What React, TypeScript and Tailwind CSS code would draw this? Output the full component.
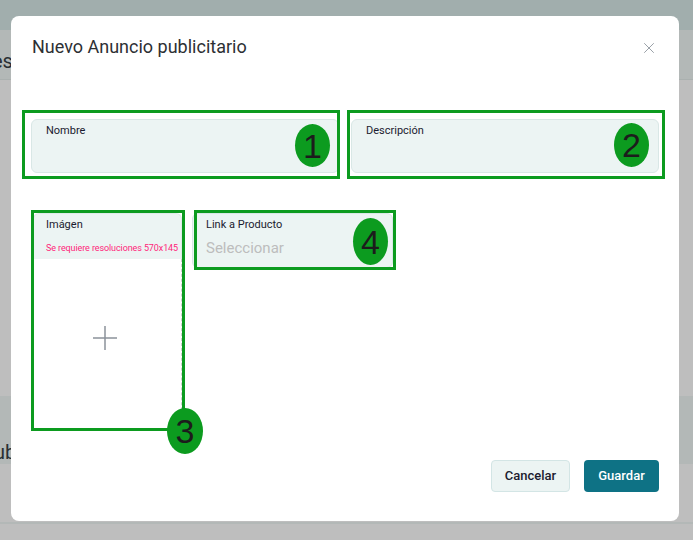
import { X } from "lucide-react";

const font = { fontFamily: "Roboto, 'Liberation Sans', sans-serif" };

function Marker({ n, className }: { n: string; className: string }) {
  return (
    <div
      className={`absolute flex items-center justify-center rounded-[50%] bg-[#0c9b1f] text-[34px] leading-none text-[#1c1c1c] ${className}`}
      style={{ fontFamily: "'Liberation Sans', Arial, sans-serif" }}
    >
      {n}
    </div>
  );
}

function Field({ label }: { label: string }) {
  return (
    <div className="h-[54px] rounded-md border border-[#d9e7e6] bg-[#ecf4f3] px-[14px] pt-[4px]">
      <div className="text-[11px] leading-[14px] text-[#1b1b2f]">{label}</div>
    </div>
  );
}

export default function App() {
  return (
    <div className="relative h-[540px] w-[693px] overflow-hidden bg-[#bebebe]" style={font}>
      {/* page behind the overlay */}
      <div className="h-[30px] bg-[#a1aead]" />
      <div className="flex h-[49px] items-center bg-[#b3b8b7] pt-[12px]">
        <span className="ml-[-8px] text-[20px] text-[#2a2f33]">es</span>
      </div>
      <div className="h-px bg-[#aab0af]" />
      <div className="h-[316px]" />
      <div className="flex h-[68px] items-end bg-[#b3b8b7]">
        <span className="ml-[-6px] text-[20px] leading-[24px] text-[#2a2f33]">ub</span>
      </div>
      <div className="h-[58px]" />
      <div className="h-[2px] bg-[#b3b8b7]" />

      {/* modal */}
      <div className="absolute left-[11px] top-[16px] flex h-[505px] w-[668px] flex-col rounded-lg bg-white px-[20px]">
        <div className="flex items-center justify-between pt-[19px]">
          <h1 className="ml-[1px] text-[18px] leading-[24px] text-[#2d2f33]">Nuevo Anuncio publicitario</h1>
          <X size={18} strokeWidth={1.2} className="mr-[1px] mt-[2px] text-[#8f969e]" />
        </div>

        <div className="mt-[60px] grid grid-cols-2 gap-[12px]">
          <Field label="Nombre" />
          <Field label="Descripción" />
        </div>

        <div className="mt-[40px] flex gap-[10px] pl-[2px]">
          <div className="flex h-[217px] w-[149px] flex-col">
            <div className="h-[46px] rounded-t-md border border-b-0 border-[#dfeae9] bg-[#ecf4f3] pl-[12px] pt-[4px]">
              <div className="text-[11px] leading-[14px] text-[#1b1b2f]">Imágen</div>
              <div className="mt-[10px] whitespace-nowrap text-[9px] leading-[12px] tracking-[-0.1px] text-[#ff1f7a]">
                Se requiere resoluciones 570x145
              </div>
            </div>
            <div className="flex flex-1 items-center justify-center border-b border-r border-dashed border-[#cfcfcf] pb-[12px]">
              <svg width="26" height="26" viewBox="0 0 26 26" className="mr-[4px]">
                <path d="M13 1v24M1 13h24" stroke="#8c929b" strokeWidth="1.5" fill="none" />
              </svg>
            </div>
          </div>
          <div className="h-[55px] w-[201px] rounded-md border border-[#d9e7e6] bg-[#ecf4f3] px-[13px] pt-[4px]">
            <div className="text-[11px] leading-[14px] text-[#1b1b2f]">Link a Producto</div>
            <div className="mt-[7px] text-[15px] leading-[18px] text-[#bdbdbd]">Seleccionar</div>
          </div>
        </div>

        <div className="mt-auto mb-[29px] flex justify-end gap-[14px]">
          <button className="h-[32px] w-[79px] rounded border border-[#d3e5e5] bg-[#ecf4f3] text-[13px] font-medium text-[#1b1b2f]">
            Cancelar
          </button>
          <button className="h-[32px] w-[75px] rounded bg-[#0e7285] text-[13px] font-medium text-white">
            Guardar
          </button>
        </div>

        {/* annotation boxes */}
        <div className="pointer-events-none absolute left-[11px] top-[94px] h-[69px] w-[318px] border-[3px] border-[#0c9b1f]" />
        <div className="pointer-events-none absolute left-[336px] top-[94px] h-[69px] w-[318px] border-[3px] border-[#0c9b1f]" />
        <div className="pointer-events-none absolute left-[20px] top-[194px] h-[221px] w-[154px] border-[3px] border-[#0c9b1f]" />
        <div className="pointer-events-none absolute left-[183px] top-[194px] h-[60px] w-[202px] border-[3px] border-[#0c9b1f]" />
        <Marker n="1" className="left-[284px] top-[108px] h-[43px] w-[35px]" />
        <Marker n="2" className="left-[603px] top-[107px] h-[44px] w-[35px]" />
        <Marker n="3" className="left-[156px] top-[392px] h-[46px] w-[36px]" />
        <Marker n="4" className="left-[342px] top-[202px] h-[47px] w-[35px]" />
      </div>
    </div>
  );
}
